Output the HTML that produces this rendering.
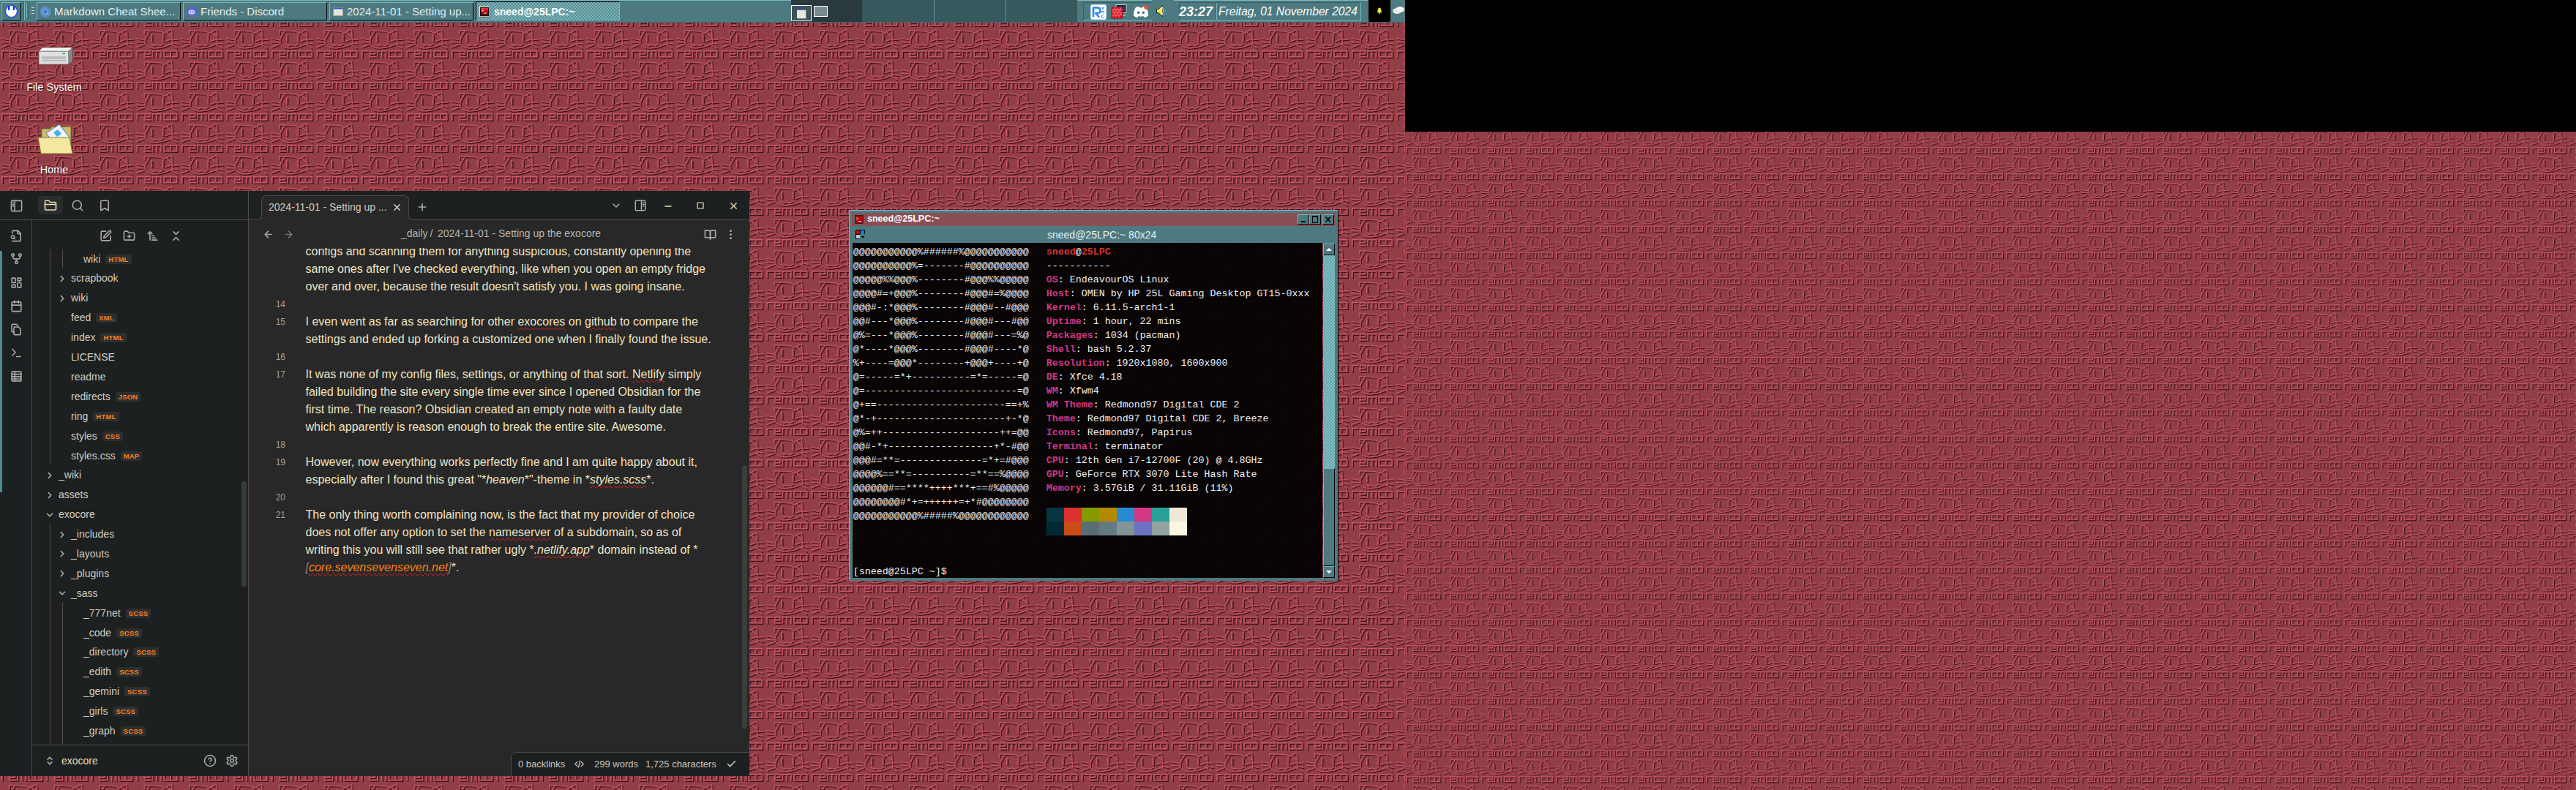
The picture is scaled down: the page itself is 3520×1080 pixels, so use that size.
<!DOCTYPE html><html><head><meta charset="utf-8"><style>
*{margin:0;padding:0;box-sizing:content-box}
html,body{width:3520px;height:1080px;overflow:hidden;background:#000}
body{position:relative;font-family:"Liberation Sans",sans-serif}
.tbtn{position:absolute;top:3px;height:23px;overflow:hidden}
.tbt{position:absolute;top:0;line-height:23px;font-size:15px;color:#e4eeee;white-space:nowrap}
.dlabel{position:absolute;text-align:center;font-size:14.5px;color:#fff;line-height:20px;text-shadow:1px 1px 1px rgba(0,0,0,0.6)}
.trow{position:absolute;height:20px;line-height:20px;font-size:14px;color:#d4ccbc;white-space:nowrap}
.tag{display:inline-block;margin-left:7px;padding:0 4px;height:13px;line-height:13px;font-size:9.5px;font-weight:bold;letter-spacing:0.2px;color:#fe8019;background:#2c2f30;border-radius:3px;vertical-align:1px}
.eline{position:absolute;left:77.5px;height:24px;line-height:24px;font-size:16px;color:#efe3c2;white-space:pre}
.lnum{position:absolute;left:18px;width:32px;text-align:right;height:24px;line-height:24px;font-size:12px;color:#a89f91}
.sp{text-decoration:underline wavy #e02020;text-decoration-thickness:1px;text-underline-offset:2px;text-decoration-skip-ink:none}
.tt{position:absolute;margin:0;font-family:"Liberation Mono",monospace;font-size:13.33px;line-height:19px;color:#f0f0f0;white-space:pre}
.tt b{font-weight:bold}
</style></head><body><svg id="wall" width="3520" height="1080" style="position:absolute;left:0;top:0">
<defs>
<pattern id="patL" patternUnits="userSpaceOnUse" x="0" y="37.9" width="61.5" height="43">
<rect width="61.5" height="43" fill="#923e47"/><g fill="none" stroke-linecap="square" stroke-linejoin="miter"><path d="M13.7 8.6 L13.3 4.15 L20.6 4.55 L36 5.4 L40 8.2 M40 8.2 L49.3 2.9 L50.5 3.75 L51.7 22.8 M44 7 L49.3 12.3 M20.6 4.55 L14.1 16.3 L14.5 22.8 M14.5 22.8 Q19.5 29 27.9 28.4 Q40 27.6 49.8 22.6 M41.6 19.1 L49.7 16.3 M22.2 22.8 L25.8 25.2 L30.3 23.6 L34.3 25.2 L38.4 22.8 M2.7 15.1 L12.9 17.1 M2.7 20 L12.9 20.35 M2.7 27.2 L13.7 22.8 M51.7 16.7 L59 16.3 M51.7 21.2 L59 22.8 M49.7 23.6 L57.4 28.45" stroke="#300a10" stroke-width="1.3" transform="translate(0.8,0.8)"/><path d="M23.4 10.2 L23.4 18.7 M38.8 10.6 L38.8 18.7" stroke="#300a10" stroke-width="1.6" transform="translate(1,0.8)"/><path d="M3.3 40.4 L3.3 32.4 L11.4 32.4 M13.9 36.4 L20.9 36.4 L20.9 32.4 L13.9 32.4 L13.9 40.4 L21.4 40.4 M24.5 40.4 L24.5 32.4 L36 32.4 L36 40.4 M30.2 32.4 L30.2 40.4 M47.2 32.4 L40.2 32.4 L40.2 40.4 L47.2 40.4 M49.3 32.4 L57.7 32.4 L57.7 40.4 L49.3 40.4 Z" stroke="#300a10" stroke-width="1.5" transform="translate(0.9,0.9)"/><path d="M13.7 8.6 L13.3 4.15 L20.6 4.55 L36 5.4 L40 8.2 M40 8.2 L49.3 2.9 L50.5 3.75 L51.7 22.8 M44 7 L49.3 12.3 M20.6 4.55 L14.1 16.3 L14.5 22.8 M14.5 22.8 Q19.5 29 27.9 28.4 Q40 27.6 49.8 22.6 M41.6 19.1 L49.7 16.3 M22.2 22.8 L25.8 25.2 L30.3 23.6 L34.3 25.2 L38.4 22.8 M2.7 15.1 L12.9 17.1 M2.7 20 L12.9 20.35 M2.7 27.2 L13.7 22.8 M51.7 16.7 L59 16.3 M51.7 21.2 L59 22.8 M49.7 23.6 L57.4 28.45" stroke="#d45c6c" stroke-width="1.3" transform="translate(-0.5,-0.5)"/><path d="M23.4 10.2 L23.4 18.7 M38.8 10.6 L38.8 18.7" stroke="#d45c6c" stroke-width="1.6" transform="translate(-0.7,-0.5)"/><path d="M3.3 40.4 L3.3 32.4 L11.4 32.4 M13.9 36.4 L20.9 36.4 L20.9 32.4 L13.9 32.4 L13.9 40.4 L21.4 40.4 M24.5 40.4 L24.5 32.4 L36 32.4 L36 40.4 M30.2 32.4 L30.2 40.4 M47.2 32.4 L40.2 32.4 L40.2 40.4 L47.2 40.4 M49.3 32.4 L57.7 32.4 L57.7 40.4 L49.3 40.4 Z" stroke="#d45c6c" stroke-width="1.5" transform="translate(-0.6,-0.6)"/><path d="M13.7 8.6 L13.3 4.15 L20.6 4.55 L36 5.4 L40 8.2 M40 8.2 L49.3 2.9 L50.5 3.75 L51.7 22.8 M44 7 L49.3 12.3 M20.6 4.55 L14.1 16.3 L14.5 22.8 M14.5 22.8 Q19.5 29 27.9 28.4 Q40 27.6 49.8 22.6 M41.6 19.1 L49.7 16.3 M22.2 22.8 L25.8 25.2 L30.3 23.6 L34.3 25.2 L38.4 22.8 M2.7 15.1 L12.9 17.1 M2.7 20 L12.9 20.35 M2.7 27.2 L13.7 22.8 M51.7 16.7 L59 16.3 M51.7 21.2 L59 22.8 M49.7 23.6 L57.4 28.45" stroke="#9e4450" stroke-width="0.5"/><path d="M23.4 10.2 L23.4 18.7 M38.8 10.6 L38.8 18.7" stroke="#9e4450" stroke-width="0.6"/><path d="M3.3 40.4 L3.3 32.4 L11.4 32.4 M13.9 36.4 L20.9 36.4 L20.9 32.4 L13.9 32.4 L13.9 40.4 L21.4 40.4 M24.5 40.4 L24.5 32.4 L36 32.4 L36 40.4 M30.2 32.4 L30.2 40.4 M47.2 32.4 L40.2 32.4 L40.2 40.4 L47.2 40.4 M49.3 32.4 L57.7 32.4 L57.7 40.4 L49.3 40.4 Z" stroke="#9e4450" stroke-width="0.6"/></g>
</pattern>
<pattern id="patR" patternUnits="userSpaceOnUse" x="0" y="0" width="61.5" height="43" patternTransform="translate(1920,175.4) scale(0.83333,0.83333)">
<rect width="61.5" height="43" fill="#923e47"/><g fill="none" stroke-linecap="square" stroke-linejoin="miter"><path d="M13.7 8.6 L13.3 4.15 L20.6 4.55 L36 5.4 L40 8.2 M40 8.2 L49.3 2.9 L50.5 3.75 L51.7 22.8 M44 7 L49.3 12.3 M20.6 4.55 L14.1 16.3 L14.5 22.8 M14.5 22.8 Q19.5 29 27.9 28.4 Q40 27.6 49.8 22.6 M41.6 19.1 L49.7 16.3 M22.2 22.8 L25.8 25.2 L30.3 23.6 L34.3 25.2 L38.4 22.8 M2.7 15.1 L12.9 17.1 M2.7 20 L12.9 20.35 M2.7 27.2 L13.7 22.8 M51.7 16.7 L59 16.3 M51.7 21.2 L59 22.8 M49.7 23.6 L57.4 28.45" stroke="#300a10" stroke-width="1.3" transform="translate(0.8,0.8)"/><path d="M23.4 10.2 L23.4 18.7 M38.8 10.6 L38.8 18.7" stroke="#300a10" stroke-width="1.6" transform="translate(1,0.8)"/><path d="M3.3 40.4 L3.3 32.4 L11.4 32.4 M13.9 36.4 L20.9 36.4 L20.9 32.4 L13.9 32.4 L13.9 40.4 L21.4 40.4 M24.5 40.4 L24.5 32.4 L36 32.4 L36 40.4 M30.2 32.4 L30.2 40.4 M47.2 32.4 L40.2 32.4 L40.2 40.4 L47.2 40.4 M49.3 32.4 L57.7 32.4 L57.7 40.4 L49.3 40.4 Z" stroke="#300a10" stroke-width="1.5" transform="translate(0.9,0.9)"/><path d="M13.7 8.6 L13.3 4.15 L20.6 4.55 L36 5.4 L40 8.2 M40 8.2 L49.3 2.9 L50.5 3.75 L51.7 22.8 M44 7 L49.3 12.3 M20.6 4.55 L14.1 16.3 L14.5 22.8 M14.5 22.8 Q19.5 29 27.9 28.4 Q40 27.6 49.8 22.6 M41.6 19.1 L49.7 16.3 M22.2 22.8 L25.8 25.2 L30.3 23.6 L34.3 25.2 L38.4 22.8 M2.7 15.1 L12.9 17.1 M2.7 20 L12.9 20.35 M2.7 27.2 L13.7 22.8 M51.7 16.7 L59 16.3 M51.7 21.2 L59 22.8 M49.7 23.6 L57.4 28.45" stroke="#d45c6c" stroke-width="1.3" transform="translate(-0.5,-0.5)"/><path d="M23.4 10.2 L23.4 18.7 M38.8 10.6 L38.8 18.7" stroke="#d45c6c" stroke-width="1.6" transform="translate(-0.7,-0.5)"/><path d="M3.3 40.4 L3.3 32.4 L11.4 32.4 M13.9 36.4 L20.9 36.4 L20.9 32.4 L13.9 32.4 L13.9 40.4 L21.4 40.4 M24.5 40.4 L24.5 32.4 L36 32.4 L36 40.4 M30.2 32.4 L30.2 40.4 M47.2 32.4 L40.2 32.4 L40.2 40.4 L47.2 40.4 M49.3 32.4 L57.7 32.4 L57.7 40.4 L49.3 40.4 Z" stroke="#d45c6c" stroke-width="1.5" transform="translate(-0.6,-0.6)"/><path d="M13.7 8.6 L13.3 4.15 L20.6 4.55 L36 5.4 L40 8.2 M40 8.2 L49.3 2.9 L50.5 3.75 L51.7 22.8 M44 7 L49.3 12.3 M20.6 4.55 L14.1 16.3 L14.5 22.8 M14.5 22.8 Q19.5 29 27.9 28.4 Q40 27.6 49.8 22.6 M41.6 19.1 L49.7 16.3 M22.2 22.8 L25.8 25.2 L30.3 23.6 L34.3 25.2 L38.4 22.8 M2.7 15.1 L12.9 17.1 M2.7 20 L12.9 20.35 M2.7 27.2 L13.7 22.8 M51.7 16.7 L59 16.3 M51.7 21.2 L59 22.8 M49.7 23.6 L57.4 28.45" stroke="#9e4450" stroke-width="0.5"/><path d="M23.4 10.2 L23.4 18.7 M38.8 10.6 L38.8 18.7" stroke="#9e4450" stroke-width="0.6"/><path d="M3.3 40.4 L3.3 32.4 L11.4 32.4 M13.9 36.4 L20.9 36.4 L20.9 32.4 L13.9 32.4 L13.9 40.4 L21.4 40.4 M24.5 40.4 L24.5 32.4 L36 32.4 L36 40.4 M30.2 32.4 L30.2 40.4 M47.2 32.4 L40.2 32.4 L40.2 40.4 L47.2 40.4 M49.3 32.4 L57.7 32.4 L57.7 40.4 L49.3 40.4 Z" stroke="#9e4450" stroke-width="0.6"/></g>
</pattern>
</defs>
<rect x="0" y="0" width="1920" height="1080" fill="url(#patL)"/>
<rect x="1920" y="180" width="1600" height="900" fill="url(#patR)"/>
<rect x="1920" y="0" width="1600" height="180" fill="#000"/>
</svg><div id="taskbar" style="position:absolute;left:0;top:0;width:1920px;height:30px;background:#4d7a80;border-bottom:1px solid #42666c"><div style="position:absolute;left:0;top:0;width:1081px;height:1px;background:#7ab8c0"></div><div class="tbtn" style="left:2px;width:25px;top:3px;height:23px;border-top:1px solid #7ab8c0;border-left:1px solid #7ab8c0;border-bottom:1px solid #000;border-right:1px solid #000"><svg width="19" height="19" style="position:absolute;left:3px;top:2px" viewBox="0 0 19 19"><circle cx="9.5" cy="9.5" r="8" fill="#fff" stroke="#1a3cff" stroke-width="1.2"/><rect x="5" y="2" width="2.2" height="6" fill="#0a2cff"/><rect x="11.8" y="2" width="2.2" height="6" fill="#0a2cff"/></svg></div><div style="position:absolute;left:32px;top:2px;width:1px;height:26px;background:#3a6066"></div><div style="position:absolute;left:33px;top:2px;width:1px;height:26px;background:#7ab8c0"></div><div style="position:absolute;left:36px;top:4px;width:1px;height:21px;background:#7ab8c0"></div><div style="position:absolute;left:38px;top:5px;width:1px;height:21px;background:#3a6066"></div><div style="position:absolute;left:43px;top:10px;width:4px;height:1px;background:#c8dcdc"></div><div style="position:absolute;left:43px;top:14px;width:4px;height:1px;background:#c8dcdc"></div><div style="position:absolute;left:43px;top:18px;width:4px;height:1px;background:#c8dcdc"></div><div class="tbtn" style="left:50px;width:195px;background:#4d7a80;border-top:1px solid #7ab8c0;border-left:1px solid #7ab8c0;border-bottom:1px solid #000;border-right:1px solid #000;"><svg width="16" height="16" viewBox="0 0 16 16" style="position:absolute;left:3px;top:4px"><circle cx="8" cy="8" r="7.5" fill="#5b8fc4"/><circle cx="8" cy="8" r="3.3" fill="#3a7ac0" stroke="#a8c8e8" stroke-width="0.8"/></svg><span class="tbt" style="left:23px">Markdown Cheat Shee...</span></div><div class="tbtn" style="left:250px;width:195px;background:#4d7a80;border-top:1px solid #7ab8c0;border-left:1px solid #7ab8c0;border-bottom:1px solid #000;border-right:1px solid #000;"><svg width="16" height="16" viewBox="0 0 16 16" style="position:absolute;left:3px;top:4px"><circle cx="8" cy="8" r="7.5" fill="#5865c8"/><ellipse cx="8" cy="8.6" rx="4.6" ry="3.2" fill="#c8d0f0"/><circle cx="6.2" cy="8.5" r="0.9" fill="#5865c8"/><circle cx="9.8" cy="8.5" r="0.9" fill="#5865c8"/></svg><span class="tbt" style="left:23px">Friends - Discord</span></div><div class="tbtn" style="left:450px;width:195px;background:#4d7a80;border-top:1px solid #7ab8c0;border-left:1px solid #7ab8c0;border-bottom:1px solid #000;border-right:1px solid #000;"><svg width="14" height="12" viewBox="0 0 14 12" style="position:absolute;left:4px;top:6px"><rect x="0.5" y="0.5" width="13" height="11" fill="#e6e6dc" stroke="#9a9a90"/><rect x="0.5" y="0.5" width="13" height="2" fill="#3a5ec8"/></svg><span class="tbt" style="left:23px">2024-11-01 - Setting up...</span></div><div class="tbtn" style="left:650px;width:195px;top:2px;height:24px;background-color:#5c959b;background-image:repeating-conic-gradient(#86c6cc 0 25%, #4d7a80 0 50%);background-size:2px 2px;border-top:1px solid #000;border-left:1px solid #000;border-bottom:1px solid #7ab8c0;border-right:1px solid #7ab8c0;"><svg width="16" height="16" viewBox="0 0 16 16" style="position:absolute;left:3px;top:5px"><defs><linearGradient id="tg" x1="0" y1="0" x2="0" y2="1"><stop offset="0" stop-color="#ff3030"/><stop offset="0.5" stop-color="#c00010"/><stop offset="1" stop-color="#500008"/></linearGradient></defs><rect x="0.5" y="0.5" width="15" height="15" rx="1" fill="#b8b4ac" stroke="#6a6660"/><path d="M1 15 L1 1 L15 1" stroke="#f4f4ee" fill="none" stroke-width="1"/><rect x="2.5" y="2.5" width="11" height="11" fill="url(#tg)" stroke="#111" stroke-width="1"/><path d="M4.5 5 L6.5 6.5 L4.5 8" stroke="#fff" fill="none" stroke-width="0.9"/><rect x="7" y="9.5" width="4" height="1" fill="#fff"/></svg><span class="tbt" style="left:24px;top:1.5px;font-weight:bold;font-size:14px;color:#fff">sneed@25LPC:~</span></div><div style="position:absolute;left:1081px;top:0;width:97px;height:30px;background:#29393d"></div><div style="position:absolute;left:1081px;top:7px;width:26px;height:20px;border:1px solid #fff;background:#3d5357"><div style="position:absolute;left:7px;top:4px;width:12px;height:11px;background:#e6e6dc;border-top:2px solid #3a5ec8;box-shadow:1px 1px 0 #777"></div></div><div style="position:absolute;left:1112px;top:8px;width:17px;height:13px;border:1px solid #fff;background:#7b8a8c"></div><div style="position:absolute;left:1178px;top:0;width:294px;height:30px;background:#37585d"></div><div style="position:absolute;left:1276px;top:0;width:1px;height:30px;background:#5a9aa0"></div><div style="position:absolute;left:1374px;top:0;width:1px;height:30px;background:#5a9aa0"></div><div style="position:absolute;left:1472px;top:0;width:102px;height:1px;background:#7ab8c0"></div><div style="position:absolute;left:1604px;top:0;width:266px;height:1px;background:#7ab8c0"></div><div style="position:absolute;left:1480px;top:3px;width:1px;height:25px;background:#3a6066"></div><div style="position:absolute;left:1480px;top:3px;width:94px;height:1px;background:#3a6066"></div><div style="position:absolute;left:1480px;top:27px;width:94px;height:1px;background:#7ab8c0"></div><svg width="22" height="21" viewBox="0 0 22 21" style="position:absolute;left:1490px;top:6px"><rect x="0" y="0" width="22" height="21" rx="2.5" fill="#fdfdff" stroke="#3a90f0" stroke-width="0.6"/><path d="M4 17 L4 4.5 L9.5 4.5 Q13.5 4.5 13.5 8.5 Q13.5 12 9.5 12 L7 12 L12 17.5" fill="none" stroke="#2a86f0" stroke-width="2.6" stroke-linejoin="round"/><path d="M15.5 3 L17 7 L18.5 3 M15.5 12 L15.5 9.5 L18.5 9.5 L18.5 12 M18.5 14.5 L15.5 14.5 L15.5 18 L18.5 18" fill="none" stroke="#2a86f0" stroke-width="0.9"/></svg><svg width="22" height="21" viewBox="0 0 22 21" style="position:absolute;left:1518px;top:5px"><rect x="7" y="1.5" width="14" height="11" fill="#222" stroke="#d0ccc4" stroke-width="1"/><rect x="9" y="3.5" width="10" height="7" fill="#203c78"/><path d="M14 13 L14 16 L20 16" stroke="#e0e0e0" stroke-width="1.2" fill="none"/><rect x="1" y="5" width="15" height="15" rx="1" fill="#d81020" stroke="#a00010" stroke-width="0.8"/><path d="M1.5 8.5 H15.5 M1.5 12 H15.5 M1.5 15.5 H15.5 M5 5 V8.5 M9 5 V8.5 M13 5 V8.5 M3 8.5 V12 M7 8.5 V12 M11 8.5 V12 M5 12 V15.5 M9 12 V15.5 M13 12 V15.5 M3 15.5 V19 M7 15.5 V19 M11 15.5 V19" stroke="#ffb0b0" stroke-width="0.7"/></svg><svg width="24" height="18" viewBox="0 0 24 18" style="position:absolute;left:1547px;top:7px"><path d="M4.5 3.5 Q7.5 1.5 9.5 2 L10.5 3.5 L13.5 3.5 L14.5 2 Q16.5 1.5 19.5 3.5 Q22.5 9 22 14.5 Q19.5 16.5 16.5 17 L15.5 15 Q12 16 8.5 15 L7.5 17 Q4.5 16.5 2 14.5 Q1.5 9 4.5 3.5Z" fill="#fafafa"/><ellipse cx="8.7" cy="10.2" rx="1.7" ry="1.9" fill="#4d7a80"/><ellipse cx="15.3" cy="10.2" rx="1.7" ry="1.9" fill="#4d7a80"/><circle cx="19.5" cy="3" r="3" fill="#f04040"/></svg><svg width="16" height="18" viewBox="0 0 16 18" style="position:absolute;left:1579px;top:6px"><path d="M1.5 6.5 L4 6.5 L9.5 1.5 L9.5 16.5 L4 11.5 L1.5 11.5Z" fill="#f4ee30" stroke="#111" stroke-width="0.9"/><path d="M9.5 3 Q11 9 9.5 15" stroke="#f0f0f0" fill="none" stroke-width="1"/><path d="M13.5 6 V7 M13.5 9 V10 M13.5 12 V13" stroke="#d8a090" stroke-width="0.7"/></svg><div style="position:absolute;left:1611px;top:3px;width:247px;height:24px;border-top:1px solid #3a6066;border-left:1px solid #3a6066;border-bottom:1px solid #7ab8c0;border-right:1px solid #7ab8c0"></div><div style="position:absolute;left:1661px;top:4px;width:1px;height:23px;background:#3a6066"></div><div style="position:absolute;left:1662px;top:4px;width:1px;height:23px;background:#7ab8c0"></div><span style="position:absolute;left:1611px;top:6px;line-height:22px;font:italic bold 18px 'Liberation Sans',sans-serif;color:#fff">23:27</span><span style="position:absolute;left:1665px;top:7px;line-height:22px;font:italic 15.6px 'Liberation Sans',sans-serif;color:#fff">Freitag, 01 November 2024</span><div style="position:absolute;left:1870px;top:0;width:30px;height:30px;background:#000;border-radius:0 0 2px 2px"></div><svg width="10" height="10" viewBox="0 0 10 10" style="position:absolute;left:1880px;top:9px"><path d="M5 0.5 L5 1.5 M2 8 Q3 6 3 4 Q3 2 5 1.8 Q7 2 7 4 Q7 6 8 8Z" fill="#f4f040" stroke="#c8b020" stroke-width="0.6"/><circle cx="5" cy="9" r="1" fill="#f4f040"/></svg><svg width="18" height="12" viewBox="0 0 18 12" style="position:absolute;left:1902px;top:8px"><ellipse cx="7" cy="7" rx="6" ry="4" fill="#e8e8e8"/><ellipse cx="11" cy="5" rx="6" ry="4" fill="#f4f4f4" stroke="#aaa" stroke-width="0.5"/></svg></div><svg width="48" height="26" viewBox="0 0 48 26" style="position:absolute;left:52px;top:64px"><path d="M1 6 L6 1 L47 1 L47 19 L42 24 L1 24Z" fill="#9a9a9a"/><rect x="1" y="6" width="41" height="18" fill="#e0e0e0" stroke="#555" stroke-width="0.8"/><path d="M1 6 L6 1 L47 1 L42 6Z" fill="#f4f4f4" stroke="#666" stroke-width="0.6"/><path d="M42 6 L47 1 L47 19 L42 24Z" fill="#888" stroke="#555" stroke-width="0.6"/><rect x="33" y="8.5" width="4" height="1.6" fill="#10c020"/><path d="M5 14 L38 14 M5 16.5 L38 16.5 M5 19 L38 19" stroke="#777" stroke-width="0.7"/></svg><div class="dlabel" style="left:24px;top:109px;width:100px">File System</div><svg width="50" height="46" viewBox="0 0 50 46" style="position:absolute;left:51px;top:168px"><path d="M6 8 L18 8 L20 5 L46 5 L46 40 L6 40Z" fill="#c8c070" stroke="#6a6020" stroke-width="0.8"/><path d="M12 14 L30 2 L44 20 L26 32Z" fill="#f0f4ff" stroke="#3050a0" stroke-width="0.8"/><path d="M22 13 L28 9 L33 15 L27 19Z" fill="#40b0f0"/><path d="M1 20 L44 20 L48 42 L5 42Z" fill="#f4e8a0" stroke="#7a7020" stroke-width="0.9"/></svg><div class="dlabel" style="left:24px;top:222px;width:100px">Home</div><div id="obs" style="position:absolute;left:0;top:261px;width:1024px;height:800px;background:#1d2021;overflow:hidden"><div style="position:absolute;left:0;top:39px;width:357px;height:1px;background:#504945"></div><div style="position:absolute;left:559px;top:39px;width:465px;height:1px;background:#504945"></div><div style="position:absolute;left:43px;top:40px;width:1px;height:760px;background:#504945"></div><div style="position:absolute;left:339px;top:0;width:1px;height:800px;background:#504945"></div><div style="position:absolute;left:340px;top:40px;width:684px;height:760px;background:#282828"></div><div style="position:absolute;left:52px;top:7px;width:34px;height:25px;border-radius:5px;background:#2a2d2e"></div><svg width="19" height="19" viewBox="0 0 24 24" style="position:absolute;left:12.5px;top:10.5px" fill="none" stroke="#aaa8a2" stroke-width="2.02" stroke-linecap="round" stroke-linejoin="round"><rect x="3" y="3" width="18" height="18" rx="2"/><path d="M9 3v18"/><path d="M5.5 7h1.5M5.5 10h1.5M5.5 13h1.5"/></svg><svg width="18" height="18" viewBox="0 0 24 24" style="position:absolute;left:60.0px;top:11.0px" fill="none" stroke="#ebdbb2" stroke-width="2.13" stroke-linecap="round" stroke-linejoin="round"><path d="M20 20a2 2 0 0 0 2-2V8a2 2 0 0 0-2-2h-7.9a2 2 0 0 1-1.69-.9L9.6 3.9A2 2 0 0 0 7.93 3H4a2 2 0 0 0-2 2v13a2 2 0 0 0 2 2Z"/><path d="M2 10h20"/></svg><svg width="18" height="18" viewBox="0 0 24 24" style="position:absolute;left:96.5px;top:11.0px" fill="none" stroke="#aaa8a2" stroke-width="2.13" stroke-linecap="round" stroke-linejoin="round"><circle cx="11" cy="11" r="8"/><path d="m21 21-4.3-4.3"/></svg><svg width="18" height="18" viewBox="0 0 24 24" style="position:absolute;left:134.0px;top:11.0px" fill="none" stroke="#aaa8a2" stroke-width="2.13" stroke-linecap="round" stroke-linejoin="round"><path d="m19 21-7-4-7 4V5a2 2 0 0 1 2-2h10a2 2 0 0 1 2 2v16z"/></svg><svg width="17" height="17" viewBox="0 0 24 24" style="position:absolute;left:13.5px;top:52.5px" fill="none" stroke="#aaa8a2" stroke-width="2.26" stroke-linecap="round" stroke-linejoin="round"><path d="M14 2v4a2 2 0 0 0 2 2h4"/><path d="M4.27 21.7A2 2 0 0 0 6 22h12a2 2 0 0 0 2-2V7l-5-5H6a2 2 0 0 0-2 2v3"/><circle cx="5" cy="14" r="3"/><path d="m9 18-1.5-1.5"/></svg><svg width="17" height="17" viewBox="0 0 24 24" style="position:absolute;left:13.5px;top:83.5px" fill="none" stroke="#aaa8a2" stroke-width="2.26" stroke-linecap="round" stroke-linejoin="round"><circle cx="5" cy="5" r="2.5"/><circle cx="19" cy="5" r="2.5"/><circle cx="12" cy="19" r="2.5"/><path d="M5 7.5v2a3 3 0 0 0 3 3h8a3 3 0 0 0 3-3v-2M12 12.5v4"/></svg><svg width="17" height="17" viewBox="0 0 24 24" style="position:absolute;left:13.5px;top:116.5px" fill="none" stroke="#aaa8a2" stroke-width="2.26" stroke-linecap="round" stroke-linejoin="round"><rect x="3" y="3" width="7" height="9" rx="1"/><rect x="14" y="3" width="7" height="5" rx="1"/><rect x="14" y="12" width="7" height="9" rx="1"/><rect x="3" y="16" width="7" height="5" rx="1"/></svg><svg width="17" height="17" viewBox="0 0 24 24" style="position:absolute;left:13.5px;top:148.5px" fill="none" stroke="#aaa8a2" stroke-width="2.26" stroke-linecap="round" stroke-linejoin="round"><rect x="3" y="4" width="18" height="18" rx="2"/><path d="M16 2v4M8 2v4M3 10h18"/></svg><svg width="17" height="17" viewBox="0 0 24 24" style="position:absolute;left:13.5px;top:180.5px" fill="none" stroke="#aaa8a2" stroke-width="2.26" stroke-linecap="round" stroke-linejoin="round"><path d="M9 7h7l4 4v9a2 2 0 0 1-2 2H9a2 2 0 0 1-2-2V9a2 2 0 0 1 2-2z"/><path d="M7 17H5a2 2 0 0 1-2-2V4a2 2 0 0 1 2-2h7l3 3"/></svg><svg width="17" height="17" viewBox="0 0 24 24" style="position:absolute;left:13.5px;top:212.5px" fill="none" stroke="#aaa8a2" stroke-width="2.26" stroke-linecap="round" stroke-linejoin="round"><path d="m4 17 6-6-6-6"/><path d="M12 19h8"/></svg><svg width="17" height="17" viewBox="0 0 24 24" style="position:absolute;left:13.5px;top:244.5px" fill="none" stroke="#aaa8a2" stroke-width="2.26" stroke-linecap="round" stroke-linejoin="round"><rect x="3" y="3" width="18" height="18" rx="1"/><path d="M3 8h18M3 12.5h18M3 17h18M9 3v18"/></svg><div style="position:absolute;left:0;top:82px;width:3px;height:330px;background:#4f8a92"></div><svg width="17" height="17" viewBox="0 0 24 24" style="position:absolute;left:135.5px;top:52.5px" fill="none" stroke="#aaa8a2" stroke-width="2.26" stroke-linecap="round" stroke-linejoin="round"><path d="M12 3H5a2 2 0 0 0-2 2v14a2 2 0 0 0 2 2h14a2 2 0 0 0 2-2v-7"/><path d="M18.4 2.6a2.1 2.1 0 1 1 3 3L12 15l-4 1 1-4Z"/></svg><svg width="17" height="17" viewBox="0 0 24 24" style="position:absolute;left:167.5px;top:52.5px" fill="none" stroke="#aaa8a2" stroke-width="2.26" stroke-linecap="round" stroke-linejoin="round"><path d="M12 10v6M9 13h6"/><path d="M20 20a2 2 0 0 0 2-2V8a2 2 0 0 0-2-2h-7.9a2 2 0 0 1-1.69-.9L9.6 3.9A2 2 0 0 0 7.93 3H4a2 2 0 0 0-2 2v13a2 2 0 0 0 2 2Z"/></svg><svg width="17" height="17" viewBox="0 0 24 24" style="position:absolute;left:199.5px;top:52.5px" fill="none" stroke="#aaa8a2" stroke-width="2.26" stroke-linecap="round" stroke-linejoin="round"><path d="m3 8 4-4 4 4M7 4v16M11 12h4M11 16h7M11 20h10"/></svg><svg width="17" height="17" viewBox="0 0 24 24" style="position:absolute;left:231.5px;top:52.5px" fill="none" stroke="#aaa8a2" stroke-width="2.26" stroke-linecap="round" stroke-linejoin="round"><path d="m7 20 5-5 5 5M7 4l5 5 5-5"/></svg><div style="position:absolute;left:44px;top:80px;width:295px;height:677px;overflow:hidden"><div style="position:absolute;left:24px;top:0;width:1px;height:293px;background:#504945"></div><div style="position:absolute;left:41px;top:0;width:1px;height:25px;background:#504945"></div><div style="position:absolute;left:24px;top:376px;width:1px;height:301px;background:#504945"></div><div style="position:absolute;left:41px;top:482px;width:1px;height:195px;background:#504945"></div><div class="trow" style="left:70px;top:2.5px">wiki<span class="tag">HTML</span></div><div class="trow" style="left:53px;top:29.4px">scrapbook</div><svg width="14" height="14" viewBox="0 0 24 24" style="position:absolute;left:34.0px;top:32.896000000000015px" fill="none" stroke="#aaa8a2" stroke-width="2.91" stroke-linecap="round" stroke-linejoin="round"><path d="m9 18 6-6-6-6"/></svg><div class="trow" style="left:53px;top:56.3px">wiki</div><svg width="14" height="14" viewBox="0 0 24 24" style="position:absolute;left:34.0px;top:59.79200000000003px" fill="none" stroke="#aaa8a2" stroke-width="2.91" stroke-linecap="round" stroke-linejoin="round"><path d="m9 18 6-6-6-6"/></svg><div class="trow" style="left:53px;top:83.2px">feed<span class="tag">XML</span></div><div class="trow" style="left:53px;top:110.1px">index<span class="tag">HTML</span></div><div class="trow" style="left:53px;top:137.0px">LICENSE</div><div class="trow" style="left:53px;top:163.9px">readme</div><div class="trow" style="left:53px;top:190.8px">redirects<span class="tag">JSON</span></div><div class="trow" style="left:53px;top:217.7px">ring<span class="tag">HTML</span></div><div class="trow" style="left:53px;top:244.6px">styles<span class="tag">CSS</span></div><div class="trow" style="left:53px;top:271.5px">styles.css<span class="tag">MAP</span></div><div class="trow" style="left:36px;top:298.4px">_wiki</div><svg width="14" height="14" viewBox="0 0 24 24" style="position:absolute;left:17.0px;top:301.856px" fill="none" stroke="#aaa8a2" stroke-width="2.91" stroke-linecap="round" stroke-linejoin="round"><path d="m9 18 6-6-6-6"/></svg><div class="trow" style="left:36px;top:325.3px">assets</div><svg width="14" height="14" viewBox="0 0 24 24" style="position:absolute;left:17.0px;top:328.75199999999995px" fill="none" stroke="#aaa8a2" stroke-width="2.91" stroke-linecap="round" stroke-linejoin="round"><path d="m9 18 6-6-6-6"/></svg><div class="trow" style="left:36px;top:352.1px">exocore</div><svg width="14" height="14" viewBox="0 0 24 24" style="position:absolute;left:17.0px;top:355.648px" fill="none" stroke="#aaa8a2" stroke-width="2.91" stroke-linecap="round" stroke-linejoin="round"><path d="m6 9 6 6 6-6"/></svg><div class="trow" style="left:53px;top:379.0px">_includes</div><svg width="14" height="14" viewBox="0 0 24 24" style="position:absolute;left:34.0px;top:382.544px" fill="none" stroke="#aaa8a2" stroke-width="2.91" stroke-linecap="round" stroke-linejoin="round"><path d="m9 18 6-6-6-6"/></svg><div class="trow" style="left:53px;top:405.9px">_layouts</div><svg width="14" height="14" viewBox="0 0 24 24" style="position:absolute;left:34.0px;top:409.44000000000005px" fill="none" stroke="#aaa8a2" stroke-width="2.91" stroke-linecap="round" stroke-linejoin="round"><path d="m9 18 6-6-6-6"/></svg><div class="trow" style="left:53px;top:432.8px">_plugins</div><svg width="14" height="14" viewBox="0 0 24 24" style="position:absolute;left:34.0px;top:436.336px" fill="none" stroke="#aaa8a2" stroke-width="2.91" stroke-linecap="round" stroke-linejoin="round"><path d="m9 18 6-6-6-6"/></svg><div class="trow" style="left:53px;top:459.7px">_sass</div><svg width="14" height="14" viewBox="0 0 24 24" style="position:absolute;left:34.0px;top:463.23199999999997px" fill="none" stroke="#aaa8a2" stroke-width="2.91" stroke-linecap="round" stroke-linejoin="round"><path d="m6 9 6 6 6-6"/></svg><div class="trow" style="left:70px;top:486.6px">_777net<span class="tag">SCSS</span></div><div class="trow" style="left:70px;top:513.5px">_code<span class="tag">SCSS</span></div><div class="trow" style="left:70px;top:540.4px">_directory<span class="tag">SCSS</span></div><div class="trow" style="left:70px;top:567.3px">_edith<span class="tag">SCSS</span></div><div class="trow" style="left:70px;top:594.2px">_gemini<span class="tag">SCSS</span></div><div class="trow" style="left:70px;top:621.1px">_girls<span class="tag">SCSS</span></div><div class="trow" style="left:70px;top:648.0px">_graph<span class="tag">SCSS</span></div><div style="position:absolute;left:286px;top:317px;width:7px;height:144px;border-radius:3.5px;background:#363b3c"></div></div><div style="position:absolute;left:44px;top:757px;width:295px;height:1px;background:#504945"></div><svg width="14" height="14" viewBox="0 0 24 24" style="position:absolute;left:61.0px;top:772.0px" fill="none" stroke="#aaa8a2" stroke-width="2.91" stroke-linecap="round" stroke-linejoin="round"><path d="m7 15 5 5 5-5M7 9l5-5 5 5"/></svg><div style="position:absolute;left:84px;top:769px;height:20px;line-height:20px;font-size:14px;color:#ebdbb2">exocore</div><svg width="18" height="18" viewBox="0 0 24 24" style="position:absolute;left:278.0px;top:770.0px" fill="none" stroke="#aaa8a2" stroke-width="2.13" stroke-linecap="round" stroke-linejoin="round"><circle cx="12" cy="12" r="10"/><path d="M9.1 9a3 3 0 0 1 5.8 1c0 2-3 3-3 3M12 17h.01"/></svg><svg width="18" height="18" viewBox="0 0 24 24" style="position:absolute;left:308.0px;top:770.0px" fill="none" stroke="#aaa8a2" stroke-width="2.13" stroke-linecap="round" stroke-linejoin="round"><path d="M12.22 2h-.44a2 2 0 0 0-2 2v.18a2 2 0 0 1-1 1.73l-.43.25a2 2 0 0 1-2 0l-.15-.08a2 2 0 0 0-2.73.73l-.22.38a2 2 0 0 0 .73 2.73l.15.1a2 2 0 0 1 1 1.72v.51a2 2 0 0 1-1 1.74l-.15.09a2 2 0 0 0-.73 2.73l.22.38a2 2 0 0 0 2.73.73l.15-.08a2 2 0 0 1 2 0l.43.25a2 2 0 0 1 1 1.73V20a2 2 0 0 0 2 2h.44a2 2 0 0 0 2-2v-.18a2 2 0 0 1 1-1.73l.43-.25a2 2 0 0 1 2 0l.15.08a2 2 0 0 0 2.73-.73l.22-.39a2 2 0 0 0-.73-2.73l-.15-.08a2 2 0 0 1-1-1.74v-.5a2 2 0 0 1 1-1.74l.15-.09a2 2 0 0 0 .73-2.73l-.22-.38a2 2 0 0 0-2.73-.73l-.15.08a2 2 0 0 1-2 0l-.43-.25a2 2 0 0 1-1-1.73V4a2 2 0 0 0-2-2z"/><circle cx="12" cy="12" r="3"/></svg><div style="position:absolute;left:357px;top:6px;width:200px;height:33px;background:#282828;border:1px solid #504945;border-bottom:none;border-radius:7px 7px 0 0"></div><div style="position:absolute;left:350px;top:32px;width:8px;height:8px;background:#282828"></div><div style="position:absolute;left:349px;top:31px;width:8px;height:8px;background:#1d2021;border-right:1px solid #504945;border-bottom:1px solid #504945;border-radius:0 0 7px 0"></div><div style="position:absolute;left:558px;top:32px;width:8px;height:8px;background:#282828"></div><div style="position:absolute;left:558px;top:31px;width:8px;height:8px;background:#1d2021;border-left:1px solid #504945;border-bottom:1px solid #504945;border-radius:0 0 0 7px"></div><div style="position:absolute;left:367px;top:12px;height:20px;line-height:20px;font-size:14px;color:#d4ccbc">2024-11-01 - Setting up ...</div><svg width="15" height="15" viewBox="0 0 24 24" style="position:absolute;left:534.5px;top:14.5px" fill="none" stroke="#d4ccbc" stroke-width="2.56" stroke-linecap="round" stroke-linejoin="round"><path d="M18 6 6 18M6 6l12 12"/></svg><svg width="16" height="16" viewBox="0 0 24 24" style="position:absolute;left:569.0px;top:14.0px" fill="none" stroke="#aaa8a2" stroke-width="2.40" stroke-linecap="round" stroke-linejoin="round"><path d="M5 12h14M12 5v14"/></svg><svg width="16" height="16" viewBox="0 0 24 24" style="position:absolute;left:834.0px;top:12.0px" fill="none" stroke="#aaa8a2" stroke-width="2.40" stroke-linecap="round" stroke-linejoin="round"><path d="m6 9 6 6 6-6"/></svg><svg width="18" height="18" viewBox="0 0 24 24" style="position:absolute;left:866.0px;top:11.0px" fill="none" stroke="#aaa8a2" stroke-width="2.13" stroke-linecap="round" stroke-linejoin="round"><rect x="3" y="3" width="18" height="18" rx="2"/><path d="M14 3v18"/><path d="M17 7h1.5M17 10h1.5M17 13h1.5"/></svg><svg width="16" height="16" viewBox="0 0 24 24" style="position:absolute;left:905.0px;top:13.0px" fill="none" stroke="#efe0b8" stroke-width="1.95" stroke-linecap="round" stroke-linejoin="round"><path d="M6 12h12"/></svg><svg width="12" height="12" viewBox="0 0 24 24" style="position:absolute;left:951.0px;top:14.0px" fill="none" stroke="#efe0b8" stroke-width="2.40" stroke-linecap="round" stroke-linejoin="round"><rect x="4" y="4" width="16" height="16"/></svg><svg width="15" height="15" viewBox="0 0 24 24" style="position:absolute;left:994.5px;top:12.5px" fill="none" stroke="#efe0b8" stroke-width="2.08" stroke-linecap="round" stroke-linejoin="round"><path d="M18 6 6 18M6 6l12 12"/></svg><svg width="15" height="15" viewBox="0 0 24 24" style="position:absolute;left:358.5px;top:51.5px" fill="none" stroke="#aaa8a2" stroke-width="2.56" stroke-linecap="round" stroke-linejoin="round"><path d="m12 19-7-7 7-7M19 12H5"/></svg><svg width="15" height="15" viewBox="0 0 24 24" style="position:absolute;left:386.5px;top:51.5px" fill="none" stroke="#7c6f64" stroke-width="2.56" stroke-linecap="round" stroke-linejoin="round"><path d="M5 12h14M12 5l7 7-7 7"/></svg><div style="position:absolute;left:548px;top:48px;height:20px;line-height:20px;font-size:14px;color:#bab6ae;white-space:pre">_daily</div><div style="position:absolute;left:587.5px;top:48px;height:20px;line-height:20px;font-size:14px;color:#bab6ae;white-space:pre">/</div><div style="position:absolute;left:598px;top:48px;height:20px;line-height:20px;font-size:14px;color:#bab6ae;white-space:pre">2024-11-01 - Setting up the exocore</div><svg width="17" height="17" viewBox="0 0 24 24" style="position:absolute;left:961.5px;top:50.5px" fill="none" stroke="#aaa8a2" stroke-width="2.26" stroke-linecap="round" stroke-linejoin="round"><path d="M2 4h6a4 4 0 0 1 4 4v13a3 3 0 0 0-3-3H2z"/><path d="M22 4h-6a4 4 0 0 0-4 4v13a3 3 0 0 1 3-3h7z"/></svg><svg width="17" height="17" viewBox="0 0 24 24" style="position:absolute;left:989.5px;top:50.5px" fill="none" stroke="#aaa8a2" stroke-width="2.26" stroke-linecap="round" stroke-linejoin="round"><circle cx="12" cy="5" r="1"/><circle cx="12" cy="12" r="1"/><circle cx="12" cy="19" r="1"/></svg><div style="position:absolute;left:340px;top:78px;width:684px;height:722px;overflow:hidden"><div class="eline" style="top:-7.3px">configs and scanning them for anything suspicious, constantly opening the</div><div class="eline" style="top:16.7px">same ones after I've checked everything, like when you open an empty fridge</div><div class="eline" style="top:40.7px">over and over, because the result doesn't satisfy you. I was going insane.</div><div class="lnum" style="top:64.7px">14</div><div class="lnum" style="top:88.7px">15</div><div class="eline" style="top:88.7px">I even went as far as searching for other <span class="sp">exocores</span> on <span class="sp">github</span> to compare the</div><div class="eline" style="top:112.7px">settings and ended up forking a customized one when I finally found the issue.</div><div class="lnum" style="top:136.7px">16</div><div class="lnum" style="top:160.7px">17</div><div class="eline" style="top:160.7px">It was none of my config files, settings, or anything of that sort. <span class="sp">Netlify</span> simply</div><div class="eline" style="top:184.7px">failed building the site every single time ever since I opened Obsidian for the</div><div class="eline" style="top:208.7px">first time. The reason? Obsidian created an empty note with a faulty date</div><div class="eline" style="top:232.7px">which apparently is reason enough to break the entire site. Awesome.</div><div class="lnum" style="top:256.7px">18</div><div class="lnum" style="top:280.7px">19</div><div class="eline" style="top:280.7px">However, now everything works perfectly fine and I am quite happy about it,</div><div class="eline" style="top:304.7px">especially after I found this great "*<i>heaven</i>*"-theme in *<i class="sp">styles.scss</i>*.</div><div class="lnum" style="top:328.7px">20</div><div class="lnum" style="top:352.7px">21</div><div class="eline" style="top:352.7px">The only thing worth complaining now, is the fact that my provider of choice</div><div class="eline" style="top:376.7px">does not offer any option to set the <span class="sp">nameserver</span> of a subdomain, so as of</div><div class="eline" style="top:400.7px">writing this you will still see that rather ugly *<i class="sp">.netlify.app</i>* domain instead of *</div><div class="eline" style="top:424.7px"><i style="color:#928374">[</i><i class="sp" style="color:#fe8019">core.sevensevenseven.net</i><i style="color:#928374">]</i>*.</div><div style="position:absolute;left:674px;top:297px;width:7px;height:360px;border-radius:3.5px;background:#3d3d3d"></div></div><div style="position:absolute;left:698px;top:767px;width:330px;height:40px;background:#1d2021;border:1px solid #504945;border-radius:7px 0 0 0"></div><div style="position:absolute;left:708px;top:774px;height:20px;line-height:20px;font-size:13px;color:#cbc5b8;white-space:pre">0 backlinks</div><div style="position:absolute;left:812px;top:774px;height:20px;line-height:20px;font-size:13px;color:#cbc5b8;white-space:pre">299 words</div><div style="position:absolute;left:882px;top:774px;height:20px;line-height:20px;font-size:13px;color:#cbc5b8;white-space:pre">1,725 characters</div><svg width="15" height="15" viewBox="0 0 24 24" style="position:absolute;left:783.5px;top:775.5px" fill="none" stroke="#cbc5b8" stroke-width="2.08" stroke-linecap="round" stroke-linejoin="round"><path d="m8 7-5 5 5 5M16 7l5 5-5 5M13.5 5l-3 14"/></svg><svg width="15" height="15" viewBox="0 0 24 24" style="position:absolute;left:991.5px;top:775.5px" fill="none" stroke="#cbc5b8" stroke-width="2.40" stroke-linecap="round" stroke-linejoin="round"><path d="M20 6 9 17l-5-5"/></svg></div><div id="term" style="position:absolute;left:1160px;top:287px;width:667px;height:505px;background:transparent;border-top:1px solid #7ab8c0;border-left:1px solid #7ab8c0;border-right:1px solid #000;border-bottom:1px solid #000"><div style="position:absolute;left:0px;top:0px;width:667px;height:45px;background:#4d7a80"></div><div style="position:absolute;left:0px;top:0px;width:4px;height:505px;background:#4d7a80"></div><div style="position:absolute;left:663px;top:0px;width:4px;height:505px;background:#4d7a80"></div><div style="position:absolute;left:0px;top:502px;width:667px;height:4px;background:#4d7a80"></div><div style="position:absolute;left:3px;top:3px;width:661px;height:18px;background:#894f55"></div><svg width="14" height="14" viewBox="0 0 14 14" style="position:absolute;left:6px;top:5px"><rect x="0.5" y="0.5" width="13" height="13" fill="#c8c8c0" stroke="#666"/><rect x="1.5" y="1.5" width="11" height="11" fill="#b00010" stroke="#111" stroke-width="0.8"/><path d="M3.5 4.5 L5.5 6 L3.5 7.5" stroke="#fff" fill="none" stroke-width="0.9"/><rect x="6" y="9" width="4" height="1" fill="#fff"/></svg><div style="position:absolute;left:24px;top:4px;height:18px;line-height:18px;font:bold 12.5px 'Liberation Sans',sans-serif;color:#fff">sneed@25LPC:~</div><div style="position:absolute;left:612px;top:5px;width:14px;height:12px;background:#4d7a80;border-top:1px solid #7ab8c0;border-left:1px solid #7ab8c0;border-right:1px solid #000;border-bottom:1px solid #000"><div style="position:absolute;left:4px;top:8px;width:6px;height:2px;background:#000"></div></div><div style="position:absolute;left:628px;top:5px;width:14px;height:12px;background:#4d7a80;border-top:1px solid #7ab8c0;border-left:1px solid #7ab8c0;border-right:1px solid #000;border-bottom:1px solid #000"><div style="position:absolute;left:3px;top:1px;width:6px;height:7px;border:1.5px solid #000;border-top-width:2px"></div></div><div style="position:absolute;left:646px;top:5px;width:14px;height:12px;background:#4d7a80;border-top:1px solid #7ab8c0;border-left:1px solid #7ab8c0;border-right:1px solid #000;border-bottom:1px solid #000"><svg width="14" height="12" viewBox="0 0 14 12" style="position:absolute;left:0;top:0"><path d="M3.5 2.5 L10 9.5 M10 2.5 L3.5 9.5" stroke="#000" stroke-width="1.5"/></svg></div><svg width="14" height="14" viewBox="0 0 14 14" style="position:absolute;left:8px;top:26px"><rect x="0" y="0" width="13" height="13" fill="#000"/><rect x="1" y="1" width="5" height="5" fill="#d00010"/><rect x="7" y="1" width="5" height="5" fill="#1080e0"/><rect x="1" y="7" width="5" height="5" fill="#c8c8c8"/><path d="M7.5 8.5 L12.5 8.5 L10 11Z" fill="#000"/><rect x="6" y="6" width="8" height="8" fill="#4d7a80"/><path d="M7.5 9 L12.5 9 L10 11.5Z" fill="#000"/></svg><div style="position:absolute;left:270px;top:25px;height:22px;line-height:22px;white-space:nowrap;font:14px 'Liberation Sans',sans-serif;color:#e8f0f0">sneed@25LPC:~ 80x24</div><div style="position:absolute;left:4px;top:44px;width:642px;height:458px;background:rgba(3,2,2,0.96);overflow:hidden"><pre class="tt" style="left:0.7px;top:2.5px">@@@@@@@@@@@%######%@@@@@@@@@@@   <b style="color:#dc322f">sneed</b>@<b style="color:#dc322f">25LPC</b>
@@@@@@@@@@%=-------#@@@@@@@@@@   -----------
@@@@@%%@@@%--------#@@@%%@@@@@   <b style="color:#d33682">OS</b>: EndeavourOS Linux
@@@@#=+@@@%--------#@@@#=%@@@@   <b style="color:#d33682">Host</b>: OMEN by HP 25L Gaming Desktop GT15-0xxx
@@@#-:*@@@%--------#@@@#--#@@@   <b style="color:#d33682">Kernel</b>: 6.11.5-arch1-1
@@#---*@@@%--------#@@@#---#@@   <b style="color:#d33682">Uptime</b>: 1 hour, 22 mins
@%=---*@@@%--------#@@@#---=%@   <b style="color:#d33682">Packages</b>: 1034 (pacman)
@*----*@@@%--------#@@@#----*@   <b style="color:#d33682">Shell</b>: bash 5.2.37
%+----=@@@*--------+@@@+----+@   <b style="color:#d33682">Resolution</b>: 1920x1080, 1600x900
@=-----=*+----------=*=-----=@   <b style="color:#d33682">DE</b>: Xfce 4.18
@=--------------------------=@   <b style="color:#d33682">WM</b>: Xfwm4
@+==----------------------==+%   <b style="color:#d33682">WM Theme</b>: Redmond97 Digital CDE 2
@*-+----------------------+-*@   <b style="color:#d33682">Theme</b>: Redmond97 Digital CDE 2, Breeze
@%=++--------------------++=@@   <b style="color:#d33682">Icons</b>: Redmond97, Papirus
@@#-*+------------------+*-#@@   <b style="color:#d33682">Terminal</b>: terminator
@@@#=**=--------------=*+=#@@@   <b style="color:#d33682">CPU</b>: 12th Gen i7-12700F (20) @ 4.8GHz
@@@@%==**=----------=**==%@@@@   <b style="color:#d33682">GPU</b>: GeForce RTX 3070 Lite Hash Rate
@@@@@@#==****++++***+==#%@@@@@   <b style="color:#d33682">Memory</b>: 3.57GiB / 31.11GiB (11%)
@@@@@@@@#*+=++++++=+*#@@@@@@@@
@@@@@@@@@@@%#####%@@@@@@@@@@@@



[sneed@25LPC ~]$</pre><div style="position:absolute;left:264.7px;top:362px;width:24px;height:19px;background:#073642"></div><div style="position:absolute;left:288.7px;top:362px;width:24px;height:19px;background:#dc322f"></div><div style="position:absolute;left:312.7px;top:362px;width:24px;height:19px;background:#859900"></div><div style="position:absolute;left:336.7px;top:362px;width:24px;height:19px;background:#b58900"></div><div style="position:absolute;left:360.7px;top:362px;width:24px;height:19px;background:#268bd2"></div><div style="position:absolute;left:384.7px;top:362px;width:24px;height:19px;background:#d33682"></div><div style="position:absolute;left:408.7px;top:362px;width:24px;height:19px;background:#2aa198"></div><div style="position:absolute;left:432.7px;top:362px;width:24px;height:19px;background:#eee8d5"></div><div style="position:absolute;left:264.7px;top:381px;width:24px;height:19px;background:#002b36"></div><div style="position:absolute;left:288.7px;top:381px;width:24px;height:19px;background:#cb4b16"></div><div style="position:absolute;left:312.7px;top:381px;width:24px;height:19px;background:#586e75"></div><div style="position:absolute;left:336.7px;top:381px;width:24px;height:19px;background:#657b83"></div><div style="position:absolute;left:360.7px;top:381px;width:24px;height:19px;background:#839496"></div><div style="position:absolute;left:384.7px;top:381px;width:24px;height:19px;background:#6c71c4"></div><div style="position:absolute;left:408.7px;top:381px;width:24px;height:19px;background:#93a1a1"></div><div style="position:absolute;left:432.7px;top:381px;width:24px;height:19px;background:#fdf6e3"></div></div><div style="position:absolute;left:647px;top:60px;width:16px;height:292px;background-color:#7ab8c0;background-image:repeating-conic-gradient(#8ccbd2 0 25%, #5a9aa0 0 50%);background-size:2px 2px"></div><div style="position:absolute;left:647px;top:45px;width:14px;height:14px;background:#4d7a80;border-top:1px solid #7ab8c0;border-left:1px solid #7ab8c0;border-right:1px solid #000;border-bottom:1px solid #000"><svg width="14" height="14" viewBox="0 0 14 14" style="position:absolute;left:0;top:0"><path d="M3 9 L7 5 L11 9Z" fill="#fff"/></svg></div><div style="position:absolute;left:647px;top:352px;width:14px;height:132px;background:#4d7a80;border-top:1px solid #7ab8c0;border-left:1px solid #7ab8c0;border-right:1px solid #000;border-bottom:1px solid #000"></div><div style="position:absolute;left:647px;top:486px;width:14px;height:14px;background:#4d7a80;border-top:1px solid #7ab8c0;border-left:1px solid #7ab8c0;border-right:1px solid #000;border-bottom:1px solid #000"><svg width="14" height="14" viewBox="0 0 14 14" style="position:absolute;left:0;top:0"><path d="M3 5 L7 9 L11 5Z" fill="#fff"/></svg></div></div></body></html>
